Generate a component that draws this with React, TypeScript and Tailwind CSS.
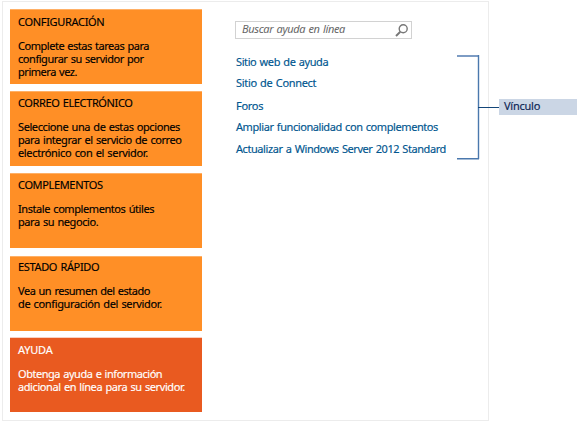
import React from "react";

type Line = { text: string; track: string };
type Card = { title: Line; lines: Line[]; box: string; pad: string };

const cards: Card[] = [
  {
    title: { text: "CONFIGURACIÓN", track: "tracking-[-0.31px]" },
    lines: [
      { text: "Complete estas tareas para", track: "tracking-[-0.47px]" },
      { text: "configurar su servidor por", track: "tracking-[-0.45px]" },
      { text: "primera vez.", track: "tracking-[-0.46px]" },
    ],
    box: "mt-[7px] h-[75px] border-[#ffb066] bg-[#ff8f26] text-black",
    pad: "pt-[5px]",
  },
  {
    title: { text: "CORREO ELECTRÓNICO", track: "tracking-[-0.38px]" },
    lines: [
      { text: "Seleccione una de estas opciones", track: "tracking-[-0.41px]" },
      { text: "para integrar el servicio de correo", track: "tracking-[-0.42px]" },
      { text: "electrónico con el servidor.", track: "tracking-[-0.34px]" },
    ],
    box: "mt-[7px] h-[75px] border-[#ffb066] bg-[#ff8f26] text-black",
    pad: "pt-[4px]",
  },
  {
    title: { text: "COMPLEMENTOS", track: "tracking-[-0.35px]" },
    lines: [
      { text: "Instale complementos útiles", track: "tracking-[-0.42px]" },
      { text: "para su negocio.", track: "tracking-[-0.42px]" },
    ],
    box: "mt-[7px] h-[75px] border-[#ffb066] bg-[#ff8f26] text-black",
    pad: "pt-[4px]",
  },
  {
    title: { text: "ESTADO RÁPIDO", track: "tracking-[-0.34px]" },
    lines: [
      { text: "Vea un resumen del estado", track: "tracking-[-0.47px]" },
      { text: "de configuración del servidor.", track: "tracking-[-0.35px]" },
    ],
    box: "mt-[8px] h-[75px] border-[#ffb066] bg-[#ff8f26] text-black",
    pad: "pt-[3px]",
  },
  {
    title: { text: "AYUDA", track: "tracking-[-0.2px]" },
    lines: [
      { text: "Obtenga ayuda e información", track: "tracking-[-0.46px]" },
      { text: "adicional en línea para su servidor.", track: "tracking-[-0.41px]" },
    ],
    box: "mt-[6px] h-[75px] border-[#f9d0c0] bg-[#e95a20] text-white",
    pad: "pt-[5px]",
  },
];

const links = [
  { text: "Sitio web de ayuda", cls: "mt-[16px] tracking-[-0.4px]" },
  { text: "Sitio de Connect", cls: "mt-[8px] tracking-[-0.32px]" },
  { text: "Foros", cls: "mt-[10px] tracking-[-0.3px]" },
  { text: "Ampliar funcionalidad con complementos", cls: "mt-[8px] tracking-[-0.42px]" },
  { text: "Actualizar a Windows Server 2012 Standard", cls: "mt-[9px] tracking-[-0.43px]" },
];

export default function App() {
  return (
    <div className="relative flex h-[422px] w-[577px] overflow-hidden bg-white pt-px pl-[2px] font-['Noto_Sans','Open_Sans',sans-serif] text-[11px] leading-[13px] whitespace-nowrap [word-spacing:0.8px]">
      <main className="flex h-[420px] w-[487px] border border-[#ececec]">
        <section className="ml-[7px] w-[192px]">
          {cards.map((c) => (
            <article key={c.title.text} className={`border-t pl-[8px] ${c.box} ${c.pad}`}>
              <h2 className={`[-webkit-text-stroke:0.15px_currentColor] ${c.title.track}`}>{c.title.text}</h2>
              <div className="mt-[11px] [-webkit-text-stroke:0.15px_currentColor]">
                {c.lines.map((l) => (
                  <p key={l.text} className={l.track}>{l.text}</p>
                ))}
              </div>
            </article>
          ))}
        </section>
        <section className="ml-[33px] w-[220px] pt-[19px]">
          <div className="flex h-[18px] w-[177px] items-center justify-between border border-[#d2d2d2] pr-[3px] pl-[6px] text-[#666] italic">
            <span className="-mt-[4px] tracking-[-0.35px]">Buscar ayuda en línea</span>
            <svg width="13" height="13" viewBox="0 0 13 13" fill="none" stroke="#777">
              <circle cx="8.2" cy="4.8" r="4" strokeWidth="1.4" />
              <path d="M5.3 7.8 1 12" strokeWidth="1.9" />
            </svg>
          </div>
          <nav className="flex flex-col pl-px text-[#00568f] [-webkit-text-stroke:0.15px_currentColor]">
            {links.map((l) => (
              <a key={l.text} className={l.cls}>{l.text}</a>
            ))}
          </nav>
        </section>
      </main>
      <svg className="absolute top-[54px] left-[456px]" width="44" height="106" fill="none">
        <path d="M1 2H22.5" stroke="#7d9cc4" strokeWidth="2" />
        <path d="M22.5 1V105M1 104.8H23" stroke="#4a78ad" strokeWidth="1.4" />
        <path d="M22 53.5H43" stroke="#134679" />
      </svg>
      <aside className="mt-[98px] ml-[10px] h-[16px] w-[78px] bg-[#cbd6e5] pl-[5px] tracking-[-0.25px] text-[#0b2453] [-webkit-text-stroke:0.15px_currentColor]">Vínculo</aside>
    </div>
  );
}
